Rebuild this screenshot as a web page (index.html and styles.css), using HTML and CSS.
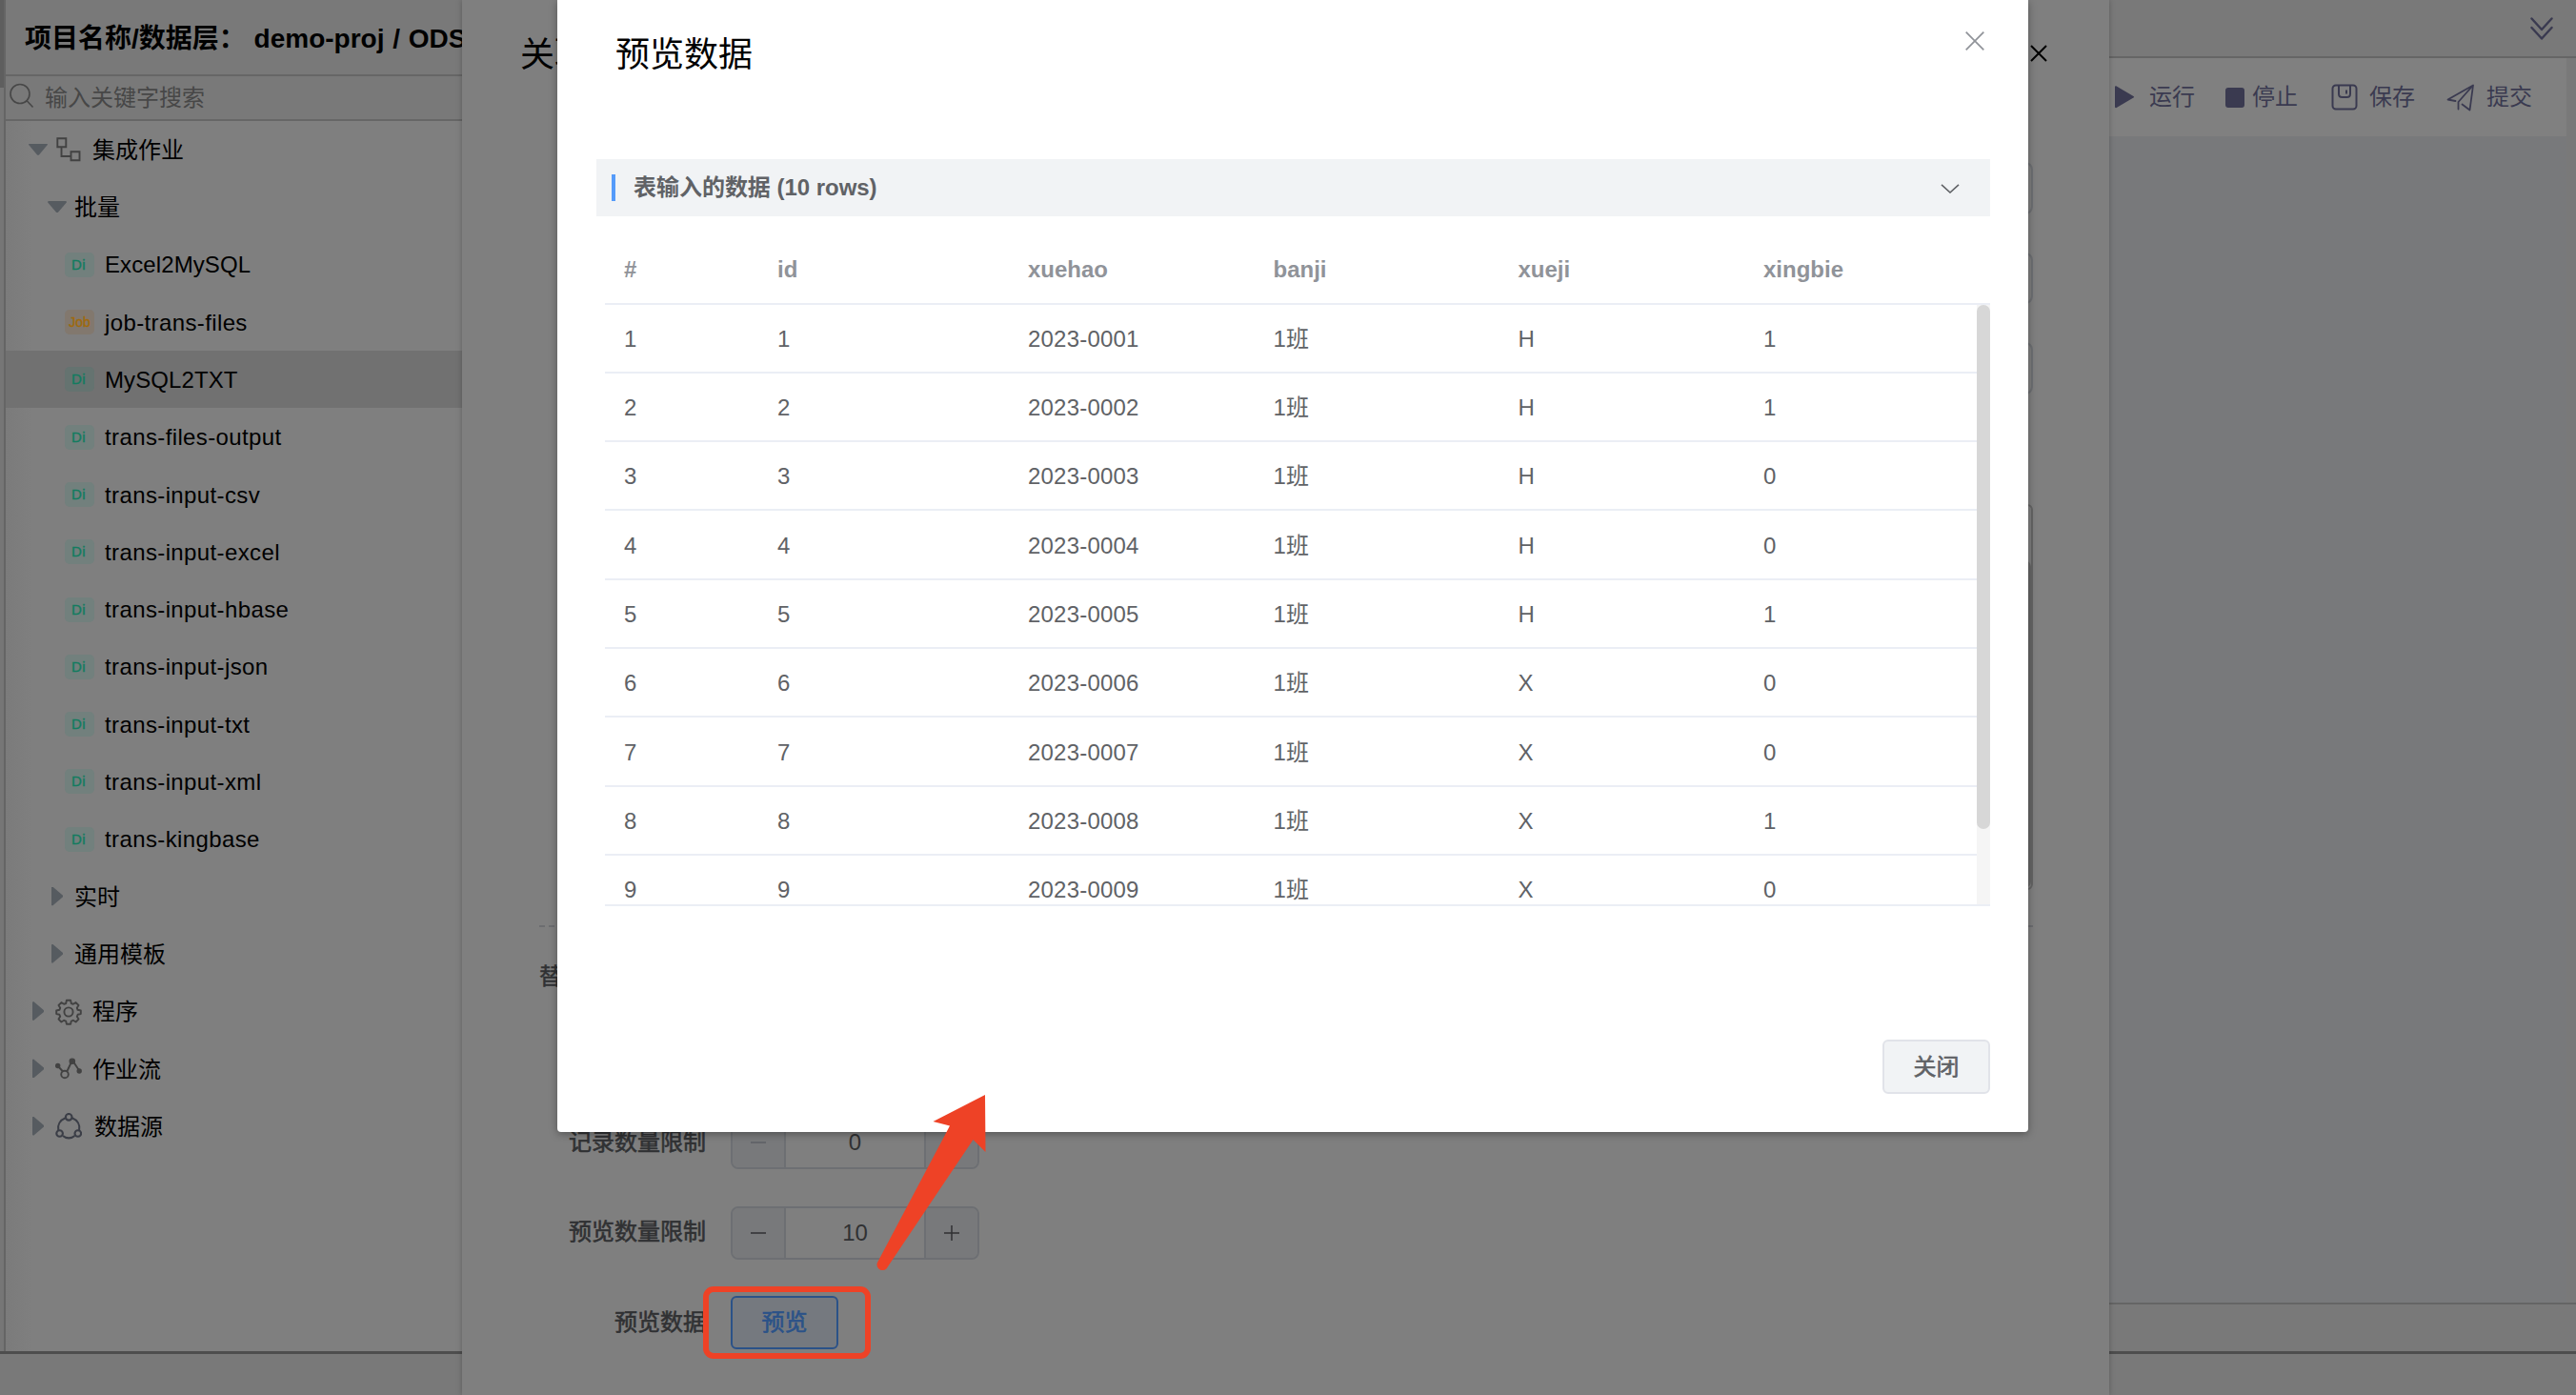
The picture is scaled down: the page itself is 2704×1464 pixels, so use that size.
FILE: index.html
```html
<!DOCTYPE html>
<html lang="zh-CN">
<head>
<meta charset="utf-8">
<title>预览数据</title>
<link rel="stylesheet" href="styles.css">
</head>
<body>
<div class="app">
  <div class="workspace">
    <div class="rail"><div class="rail-thumb"></div></div>
    <aside class="sidebar">
      <div class="project">项目名称/数据层： demo-proj / ODS</div>
      <div class="search">
        <svg class="search-icon" viewBox="0 0 26 28" fill="none" stroke="currentColor" stroke-width="1.6"><circle cx="11" cy="11.5" r="10"/><path d="M18 18.500l6.500 7"/></svg>
        <span>输入关键字搜索</span>
      </div>
      <ul class="tree">
        <li class="node lv1"><i class="caret open"></i>
          <svg class="node-icon" viewBox="0 0 28 28" fill="none" stroke="currentColor" stroke-width="1.9"><path d="M2.300 2.300h9v9h-9zM16.500 16.300h9v9h-9zM6.500 11.500v9.500h10"/></svg>
          <span>集成作业</span></li>
        <li class="node lv2"><i class="caret open"></i><span>批量</span></li>
        <li class="node leaf caps"><b class="tag">Di</b><span>Excel2MySQL</span></li>
        <li class="node leaf"><b class="tag job">Job</b><span>job-trans-files</span></li>
        <li class="node leaf caps selected"><b class="tag">Di</b><span>MySQL2TXT</span></li>
        <li class="node leaf"><b class="tag">Di</b><span>trans-files-output</span></li>
        <li class="node leaf"><b class="tag">Di</b><span>trans-input-csv</span></li>
        <li class="node leaf"><b class="tag">Di</b><span>trans-input-excel</span></li>
        <li class="node leaf"><b class="tag">Di</b><span>trans-input-hbase</span></li>
        <li class="node leaf"><b class="tag">Di</b><span>trans-input-json</span></li>
        <li class="node leaf"><b class="tag">Di</b><span>trans-input-txt</span></li>
        <li class="node leaf"><b class="tag">Di</b><span>trans-input-xml</span></li>
        <li class="node leaf"><b class="tag">Di</b><span>trans-kingbase</span></li>
        <li class="node lv2"><i class="caret"></i><span>实时</span></li>
        <li class="node lv2"><i class="caret"></i><span>通用模板</span></li>
        <li class="node lv1"><i class="caret"></i>
          <svg class="node-icon" viewBox="0 0 28 28" fill="none" stroke="currentColor" stroke-width="1.9" stroke-linejoin="round"><circle cx="14" cy="14" r="4.600"/><path d="M11.900 1.800h4.200l.7 3.200 2 .8 2.800-1.700 2.900 2.900-1.700 2.800.8 2 3.200.7v3.600l-3.200.7-.8 2 1.700 2.800-2.900 2.900-2.800-1.700-2 .8-.7 3.200h-4.200l-.7-3.200-2-.8-2.800 1.700-2.900-2.900 1.700-2.800-.8-2-3.200-.7v-3.600l3.200-.7.8-2-1.700-2.800 2.900-2.900 2.800 1.700 2-.8z"/></svg>
          <span>程序</span></li>
        <li class="node lv1"><i class="caret"></i>
          <svg class="node-icon" viewBox="0 0 28 28" fill="none" stroke="currentColor" stroke-width="1.9"><path d="M2.500 10.500l5.500 6M12.500 16l5-10.500M18.500 5.500l7 10.500"/><circle cx="10" cy="19.500" r="3.800"/><g fill="currentColor" stroke="none"><circle cx="2.700" cy="10.500" r="2.700"/><circle cx="17.800" cy="5.700" r="3.300"/><circle cx="25.200" cy="16" r="2.700"/></g></svg>
          <span>作业流</span></li>
        <li class="node lv1 source"><i class="caret"></i>
          <svg class="node-icon" viewBox="0 0 28 28" fill="none" stroke="currentColor" stroke-width="2.100"><circle cx="14.200" cy="4.300" r="3.300"/><circle cx="4.600" cy="21.500" r="3.300"/><circle cx="23.800" cy="21.500" r="3.300"/><path d="M10.700 5.200C5 7.500 2.200 12.500 3.300 18M17.700 5.200c5.700 2.300 8.500 7.300 7.400 12.800M8 24c3.500 3.200 8.900 3.200 12.400 0"/></svg>
          <span>数据源</span></li>
      </ul>
    </aside>
    <main class="main">
      <div class="tabs">
        <svg class="double-chevron" viewBox="0 0 24 24" fill="none" stroke="currentColor" stroke-width="2.400" stroke-linecap="round" stroke-linejoin="round"><path d="M1.500 1.500L12 13 22.500 1.500M1.500 11L12 22.500 22.500 11"/></svg>
      </div>
      <div class="toolbar">
        <span class="tool run"><svg viewBox="0 0 22 26"><path d="M1 2.500c0-1.200.8-1.500 1.700-.9l17.800 10.300c.8.500.8 1.200 0 1.700L2.700 23.900c-.9.600-1.700.3-1.700-.9z" fill="currentColor"/></svg>运行</span>
        <span class="tool stop"><i></i>停止</span>
        <span class="tool save"><svg viewBox="0 0 28 28" fill="none" stroke="currentColor" stroke-width="2"><rect x="1.500" y="1.500" width="25" height="25" rx="3.500"/><path d="M8 2v8.500q0 3.500 3.500 3.500h5q3.500 0 3.500-3.500V2M16 6.500v4"/></svg>保存</span>
        <span class="tool submit"><svg viewBox="0 0 30 30" fill="none" stroke="currentColor" stroke-width="1.800" stroke-linejoin="round" stroke-linecap="round"><path d="M9.500 18L1.500 16.500 28 1.500 24.500 27.500 16.500 21.500M27.500 2L12.500 19v7.500"/></svg>提交</span>
      </div>
      <div class="canvas"></div>
      <div class="status"></div>
    </main>
  </div>
  <footer class="bottom"></footer>

  <section class="drawer">
    <header class="drawer-head"><span>关联</span>
      <svg class="drawer-close" viewBox="0 0 18 18" stroke="currentColor" stroke-width="2"><path d="M1 1l16 16M17 1L1 17"/></svg>
    </header>
    <div class="inputs"><div class="input"></div><div class="input"></div><div class="input"></div></div>
    <div class="textarea"><div class="textarea-thumb"></div></div>
    <div class="divider"></div>
    <div class="replace">替</div>
    <div class="fields">
      <div class="field"><label>记录数量限制</label>
        <div class="number"><span class="minus off">
          <svg viewBox="0 0 16 16" stroke="currentColor" stroke-width="1.500"><path d="M0 8h16"/></svg></span><span class="value">0</span><span class="plus"><svg viewBox="0 0 16 16" stroke="currentColor" stroke-width="1.500"><path d="M0 8h16M8 0v16"/></svg></span></div></div>
      <div class="field"><label>预览数量限制</label>
        <div class="number"><span class="minus">
          <svg viewBox="0 0 16 16" stroke="currentColor" stroke-width="1.500"><path d="M0 8h16"/></svg></span><span class="value">10</span><span class="plus"><svg viewBox="0 0 16 16" stroke="currentColor" stroke-width="1.500"><path d="M0 8h16M8 0v16"/></svg></span></div></div>
      <div class="field"><label>预览数据</label><div class="preview-btn">预览</div></div>
    </div>
  </section>

  <section class="modal">
    <header class="modal-head"><h1>预览数据</h1>
      <svg class="modal-close" viewBox="0 0 20 20" stroke="currentColor" stroke-width="1.700"><path d="M.7.7l18.600 18.600M19.300.7L.7 19.300"/></svg>
    </header>
    <div class="collapse"><i></i><span>表输入的数据 (10 rows)</span>
      <svg viewBox="0 0 20 10" fill="none" stroke="currentColor" stroke-width="1.600"><path d="M1 .8l9 8.200 9-8.200"/></svg>
    </div>
    <div class="table">
      <div class="row thead"><span>#</span><span>id</span><span>xuehao</span><span>banji</span><span>xueji</span><span>xingbie</span></div>
      <div class="table-scroll">
        <div class="tbody">
          <div class="row"><span>1</span><span>1</span><span>2023-0001</span><span>1班</span><span>H</span><span>1</span></div>
          <div class="row"><span>2</span><span>2</span><span>2023-0002</span><span>1班</span><span>H</span><span>1</span></div>
          <div class="row"><span>3</span><span>3</span><span>2023-0003</span><span>1班</span><span>H</span><span>0</span></div>
          <div class="row"><span>4</span><span>4</span><span>2023-0004</span><span>1班</span><span>H</span><span>0</span></div>
          <div class="row"><span>5</span><span>5</span><span>2023-0005</span><span>1班</span><span>H</span><span>1</span></div>
          <div class="row"><span>6</span><span>6</span><span>2023-0006</span><span>1班</span><span>X</span><span>0</span></div>
          <div class="row"><span>7</span><span>7</span><span>2023-0007</span><span>1班</span><span>X</span><span>0</span></div>
          <div class="row"><span>8</span><span>8</span><span>2023-0008</span><span>1班</span><span>X</span><span>1</span></div>
          <div class="row"><span>9</span><span>9</span><span>2023-0009</span><span>1班</span><span>X</span><span>0</span></div>
        </div>
        <div class="scrollbar"><div class="thumb"></div></div>
      </div>
    </div>
    <footer class="modal-foot"><div class="close-btn">关闭</div></footer>
  </section>

  <div class="mark-box"></div>
  <svg class="mark-arrow" viewBox="0 0 120 190"><path d="M117 3L62.500 31 80 35.500 4 179a5.800 5.800 0 0 0 10.800 4.500L104.500 50 117.500 63z" fill="#ee4226"/></svg>
</div>
</body>
</html>
```
FILE: styles.css
```css
* { box-sizing: border-box; }

body {
  margin: 0;
  font: 24px/1.2 "Liberation Sans", "Noto Sans CJK SC", sans-serif;
  color: #000;
}

.app {
  position: relative;
  display: flex;
  flex-direction: column;
  width: 2704px;
  height: 1464px;
  overflow: hidden;
  background: #797979;
}

.workspace { display: flex; height: 1421px; border-bottom: 3px solid #4e4e4e; }
.bottom { flex: 1; background: #797979; }

.rail { width: 6px; background: #767676; border-right: 2px solid #656565; }
.rail-thumb { height: 92px; background: #5e5e5e; }

/* project tree */
.sidebar { width: 480px; background: linear-gradient(90deg, #7b7b7b, #7f7f7f 28px); }
.project {
  height: 80px;
  padding-left: 20px;
  overflow: hidden;
  background: #797979;
  border-bottom: 2px solid #666;
  font-size: 28px;
  font-weight: 700;
  line-height: 81px;
  white-space: nowrap;
  word-spacing: 1px;
}
.search {
  display: flex;
  align-items: center;
  gap: 11px;
  height: 47px;
  padding: 0 4px;
  background: #797979;
  border-bottom: 2px solid #666;
  color: #474747;
}
.search span { padding-top: 2px; }
.search-icon { width: 26px; height: 28px; margin-top: -3px; }

.tree { margin: 0; padding: 0; list-style: none; }
.node { display: flex; align-items: center; height: 60.3px; }
.node span { padding-top: 2px; letter-spacing: .38px; }
.caps span { letter-spacing: .1px; }
.lv1 { padding-left: 24px; }
.lv2 { padding-left: 44px; }
.lv2 span { margin-left: 8px; letter-spacing: 0; }
.leaf { padding-left: 62px; }
.leaf span { margin-left: 11px; }
.selected { background: #717171; }
.lv1 span { margin-left: 11px; letter-spacing: 0; }
.source span { margin-left: 13px; }
.node-icon { width: 28px; height: 28px; margin-left: 8px; color: #424242; }
.source .node-icon { color: #3b3e47; }

.caret { display: flex; justify-content: center; align-items: center; width: 20px; height: 20px; margin-top: -1px; }
.caret::before {
  content: "";
  width: 12px;
  height: 20px;
  background: #565b60;
  clip-path: polygon(0 3%, 10% 0, 100% 46%, 100% 54%, 10% 100%, 0 97%);
}
.caret.open::before {
  width: 20px;
  height: 12px;
  clip-path: polygon(3% 0, 97% 0, 100% 10%, 54% 100%, 46% 100%, 0 10%);
}
.tag {
  width: 31px;
  height: 26px;
  border-radius: 5px;
  background: #72807d;
  color: #127c60;
  font-size: 15px;
  font-weight: 400;
  letter-spacing: .4px;
  line-height: 26px;
  padding-right: 2px;
  text-align: center;
  -webkit-text-stroke: .4px currentColor;
}
.selected .tag { background: #657370; }
.job { padding: 0; background: #82786e; color: #a06a0c; font-size: 14px; letter-spacing: 0; }

/* editor */
.main { display: flex; flex-direction: column; flex: 1; }
.tabs {
  display: flex;
  justify-content: flex-end;
  height: 61px;
  padding: 18px 24px 0 0;
  border-bottom: 2px solid #656565;
  color: #3a3a50;
}
.double-chevron { width: 24px; height: 24px; }
.toolbar {
  display: flex;
  justify-content: flex-end;
  align-items: center;
  height: 82px;
  margin-right: 10px;
  padding: 1px 36px 0 0;
  background: #808080;
  color: #3a3a50;
}
.tool { display: flex; align-items: center; }
.run svg { width: 22px; height: 26px; margin-right: 15px; }
.stop { margin-left: 32px; }
.stop i { width: 20px; height: 21px; margin-right: 8px; border-radius: 3px; background: currentColor; }
.save { margin-left: 35px; }
.save svg { width: 28px; height: 28px; margin-right: 12px; }
.submit { margin-left: 33px; }
.submit svg { width: 30px; height: 30px; margin-right: 12px; }
.canvas { flex: 1; margin-right: 10px; background: #78797b; }
.status { height: 51px; border-top: 2px solid #656565; }

/* drawer */
.drawer {
  position: absolute;
  top: 0;
  left: 485px;
  display: flex;
  flex-direction: column;
  width: 1729px;
  height: 1464px;
  padding: 0 80px 0 81px;
  background: #7f7f7f;
  box-shadow: 0 0 6px rgba(0, 0, 0, .25);
}
.drawer-head {
  display: flex;
  justify-content: space-between;
  height: 170px;
  margin: 0 -15px 0 -20px;
  font-size: 36px;
  line-height: 115px;
}
.drawer-close { width: 18px; height: 18px; margin-top: 47px; }
.inputs { display: flex; flex-direction: column; gap: 40px; margin-left: 202px; }
.input { height: 54.5px; border: 2px solid #6d6f73; border-radius: 8px; }
.textarea {
  display: flex;
  justify-content: flex-end;
  height: 405px;
  margin: 115.5px 0 0 202px;
  border: 2px solid #656565;
  border-radius: 6px;
}
.textarea-thumb { width: 14px; margin-top: 57px; border-radius: 7px; background: #666; }
.divider { margin-top: 37px; border-top: 2px dashed #6c6d70; }
.replace { margin-top: 37px; height: 30px; color: #303133; line-height: 30px; -webkit-text-stroke: .5px currentColor; }
.fields { display: flex; flex-direction: column; gap: 38.500px; margin-top: 131px; }
.field { display: flex; align-items: center; gap: 26px; height: 56px; color: #303133; }
.field label { width: 175px; text-align: right; white-space: nowrap; -webkit-text-stroke: .6px currentColor; }
.number {
  display: flex;
  width: 261px;
  height: 56px;
  border: 2px solid #6d6f73;
  border-radius: 8px;
  overflow: hidden;
}
.number span { display: flex; align-items: center; justify-content: center; }
.minus, .plus { width: 56px; background: #78797b; }
.minus { border-right: 2px solid #6d6f73; }
.plus { border-left: 2px solid #6d6f73; }
.off { color: #5e6064; }
.number svg { width: 16px; height: 16px; }
.number .value { flex: 1; padding-top: 1px; }
.preview-btn {
  width: 113px;
  height: 56px;
  border: 2px solid #2b5288;
  border-radius: 6px;
  background: #75797f;
  color: #2b5288;
  line-height: 52px;
  text-align: center;
  -webkit-text-stroke: .6px currentColor;
}

/* preview dialog */
.modal {
  position: absolute;
  top: 0;
  left: 585px;
  display: flex;
  flex-direction: column;
  width: 1544px;
  height: 1188px;
  padding: 0 40px 40px 41px;
  background: #fff;
  border-radius: 0 0 4px 4px;
  box-shadow: 0 2px 8px rgba(0, 0, 0, .35);
}
.modal-head { display: flex; justify-content: space-between; height: 167px; padding: 0 6px 0 20px; }
.modal-head h1 { margin: 0; font-size: 36px; font-weight: 400; line-height: 115px; }
.modal-close { width: 20px; height: 20px; margin-top: 33px; color: #909399; }
.collapse {
  display: flex;
  align-items: center;
  height: 60px;
  padding: 0 32px 0 16px;
  background: #f1f3f5;
  color: #606266;
  font-weight: 700;
}
.collapse i { width: 4px; height: 28px; background: #559bfa; }
.collapse span { flex: 1; margin-left: 19px; letter-spacing: -.03px; }
.collapse svg { width: 20px; height: 10px; margin-top: 1px; }

.table { height: 724px; margin-left: 9px; border-bottom: 2px solid #ebeef5; color: #606266; }
.row {
  display: grid;
  grid-template-columns: 161px 263px 257.500px 257px 257.500px 1fr;
  align-items: center;
  height: 72.3px;
  border-bottom: 2px solid #ebeef5;
}
.row span { padding: 3px 0 0 20px; letter-spacing: .2px; }
.thead { height: 92.500px; padding-top: 20px; color: #909399; font-weight: 700; }
.thead span { letter-spacing: 0; }
.table-scroll { display: flex; height: 629.500px; overflow: hidden; }
.tbody { flex: 1; }
.scrollbar { width: 14px; background: #f5f5f5; }
.thumb { height: 550px; border-radius: 7px; background: #d7d7d7; }

.modal-foot { display: flex; justify-content: flex-end; margin-top: auto; }
.close-btn {
  width: 113px;
  height: 57px;
  border: 2px solid #e1e3e9;
  border-radius: 6px;
  background: #f1f3f5;
  color: #606266;
  line-height: 53px;
  text-align: center;
  -webkit-text-stroke: .6px currentColor;
}

/* callout drawn over the page */
.mark-box {
  position: absolute;
  top: 1350px;
  left: 738px;
  width: 176px;
  height: 76px;
  border: 6px solid #ee4226;
  border-radius: 11px;
}
.mark-arrow { position: absolute; top: 1146px; left: 917px; width: 120px; height: 190px; }
```
